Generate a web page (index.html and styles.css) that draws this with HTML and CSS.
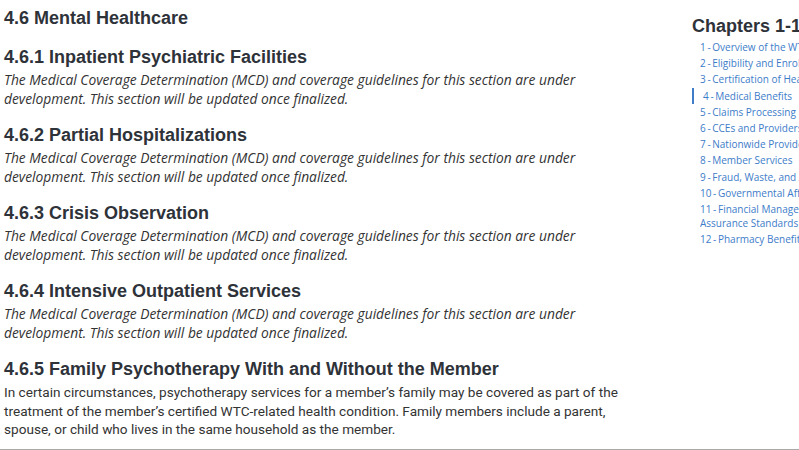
FILE: index.html
```html
<!DOCTYPE html>
<html lang="en">
<head>
<meta charset="utf-8">
<title>4.6 Mental Healthcare</title>
<link rel="stylesheet" href="styles.css">
</head>
<body>
<div class="page">
  <main class="content">
    <h1 class="title">4.6 Mental Healthcare</h1>
    <section class="section">
      <h2 class="heading">4.6.1 Inpatient Psychiatric Facilities</h2>
      <p class="note">The Medical Coverage Determination (MCD) and coverage guidelines for this section are under development. This section will be updated once finalized.</p>
    </section>
    <section class="section">
      <h2 class="heading">4.6.2 Partial Hospitalizations</h2>
      <p class="note">The Medical Coverage Determination (MCD) and coverage guidelines for this section are under development. This section will be updated once finalized.</p>
    </section>
    <section class="section">
      <h2 class="heading">4.6.3 Crisis Observation</h2>
      <p class="note">The Medical Coverage Determination (MCD) and coverage guidelines for this section are under development. This section will be updated once finalized.</p>
    </section>
    <section class="section">
      <h2 class="heading">4.6.4 Intensive Outpatient Services</h2>
      <p class="note">The Medical Coverage Determination (MCD) and coverage guidelines for this section are under development. This section will be updated once finalized.</p>
    </section>
    <section class="section">
      <h2 class="heading">4.6.5 Family Psychotherapy With and Without the Member</h2>
      <p class="body">In certain circumstances, psychotherapy services for a member’s family may be covered as part of the treatment of the member’s certified WTC-related health condition. Family members include a parent, spouse, or child who lives in the same household as the member.</p>
    </section>
  </main>
  <aside class="sidebar">
    <h2 class="side-title">Chapters 1-12</h2>
    <ul class="chapters">
      <li class="chapter"><a href="#">1&thinsp;-&thinsp;Overview of the WTC Health Program</a></li>
      <li class="chapter"><a href="#">2&thinsp;-&thinsp;Eligibility and Enrollment</a></li>
      <li class="chapter"><a href="#">3&thinsp;-&thinsp;Certification of Health Conditions</a></li>
      <li class="chapter active"><a href="#">4&thinsp;-&thinsp;Medical Benefits</a></li>
      <li class="chapter"><a href="#">5&thinsp;-&thinsp;Claims Processing</a></li>
      <li class="chapter"><a href="#">6&thinsp;-&thinsp;CCEs and Providers</a></li>
      <li class="chapter"><a href="#">7&thinsp;-&thinsp;Nationwide Provider Network</a></li>
      <li class="chapter"><a href="#">8&thinsp;-&thinsp;Member Services</a></li>
      <li class="chapter"><a href="#">9&thinsp;-&thinsp;Fraud, Waste, and Abuse</a></li>
      <li class="chapter"><a href="#">10&thinsp;-&thinsp;Governmental Affairs</a></li>
      <li class="chapter"><a href="#">11&thinsp;-&thinsp;Financial Management and Quality<br>Assurance Standards</a></li>
      <li class="chapter"><a href="#">12&thinsp;-&thinsp;Pharmacy Benefits</a></li>
    </ul>
  </aside>
</div>
</body>
</html>
```
FILE: styles.css
```css
html, body {
  margin: 0;
  padding: 0;
  background: #ffffff;
}
body {
  width: 799px;
  height: 450px;
  overflow: hidden;
}
.page {
  display: grid;
  grid-template-columns: 692px 1fr;
  height: 449px;
  border-bottom: 1px solid #a9a9a9;
  overflow: hidden;
}
.content {
  padding: 6px 0 0 4px;
}
.title {
  margin: 0 0 15px 0;
  font-family: "Liberation Sans", Arial, sans-serif;
  font-weight: 700;
  font-size: 18px;
  line-height: 24px;
  color: #2e3239;
}
.section {
  margin-bottom: 15px;
}
.heading {
  margin: 0 0 2px 0;
  font-family: "Liberation Sans", Arial, sans-serif;
  font-weight: 700;
  font-size: 18px;
  line-height: 24px;
  color: #2e3239;
}
.note, .body {
  margin: 0;
  line-height: 18.5px;
  color: #333333;
}
.note {
  width: 630px;
  font-family: "Open Sans", "Noto Sans", sans-serif;
  font-style: italic;
  font-size: 13.8px;
}
.body {
  width: 640px;
  font-family: Roboto, "Open Sans", sans-serif;
  font-size: 13.6px;
}
.sidebar {
  padding-top: 14px;
  white-space: nowrap;
}
.side-title {
  margin: 0 0 1px 0;
  font-family: "Liberation Sans", Arial, sans-serif;
  font-weight: 700;
  font-size: 18px;
  line-height: 24px;
  color: #2e3239;
}
.chapters {
  list-style: none;
  margin: 0;
  padding: 0;
}
.chapter {
  padding: 1px 0 1.2px 8px;
  font-family: "Open Sans", "Noto Sans", sans-serif;
  font-size: 10px;
  line-height: 14px;
}
.chapter a {
  color: #3d7cc9;
  text-decoration: none;
}
.chapter.active {
  border-left: 2px solid #3d7cc9;
  padding-left: 9px;
}
```
